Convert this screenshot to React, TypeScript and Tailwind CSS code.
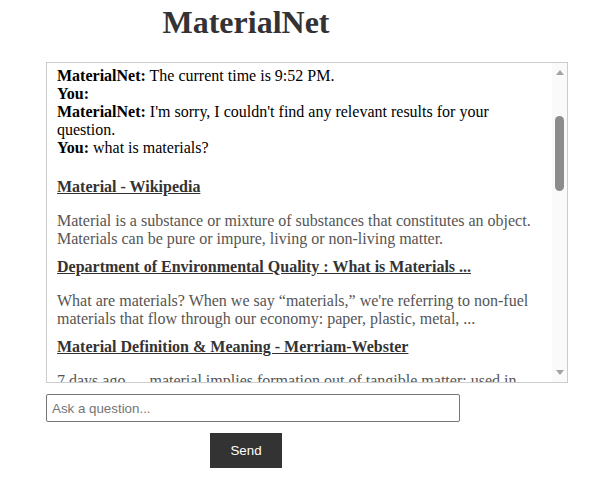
import { useEffect, useRef } from "react";

const history = [
    { who: "MaterialNet", text: "Hello! I'm MaterialNet. How can I help you today?" },
    { who: "You", text: "hello" },
    { who: "MaterialNet", text: "Hi! Ask me anything about materials." },
    { who: "You", text: "what is steel?" },
    { who: "MaterialNet", text: "Steel is an alloy of iron and carbon." },
    { who: "You", text: "thanks" },
    { who: "MaterialNet", text: "You're welcome!" },
    { who: "You", text: "what time is it?" },
    { who: "MaterialNet", text: "The current time is 9:52 PM." },
    { who: "You", text: "" },
    { who: "MaterialNet", text: "I'm sorry, I couldn't find any relevant results for your question." },
    { who: "You", text: "what is materials?" },
];

const results = [
    {
        title: "Material - Wikipedia",
        desc: "Material is a substance or mixture of substances that constitutes an object. Materials can be pure or impure, living or non-living matter.",
    },
    {
        title: "Department of Environmental Quality : What is Materials ...",
        desc: "What are materials? When we say \u201cmaterials,\u201d we're referring to non-fuel materials that flow through our economy: paper, plastic, metal, ...",
    },
    {
        title: "Material Definition & Meaning - Merriam-Webster",
        desc: "7 days ago \u2014 material implies formation out of tangible matter; used in reference to persons, it implies a ...",
    },
    {
        title: "Materials | Definition, Types, & Facts | Britannica",
        desc: "Materials are the substances of which things are made, such as metals, ceramics, polymers and composites.",
    },
    {
        title: "What are materials? - BBC Bitesize",
        desc: "Everything around us is made from materials. Some materials are natural and some are made by people.",
    },
    {
        title: "Materials science - Wikipedia",
        desc: "Materials science is an interdisciplinary field of researching and discovering materials and their properties.",
    },
    {
        title: "Material - Definition, Meaning & Synonyms | Vocabulary.com",
        desc: "Material is the substance that something is made of, such as the wood of a table or the cotton of a shirt.",
    },
    {
        title: "Types of Materials - Science Learning Hub",
        desc: "Materials can be grouped by their properties: strength, hardness, flexibility, conductivity and more.",
    },
    {
        title: "MATERIAL | English meaning - Cambridge Dictionary",
        desc: "a physical substance that things can be made from, or cloth used for making clothes, curtains, etc.",
    },
];

function ScrollBar() {
    return (
        <div className="flex w-[15px] shrink-0 flex-col bg-[#fafafa]">
            <div className="flex h-[15px] items-center justify-center pt-[4px]">
                <svg width="8" height="5" viewBox="0 0 8 5"><path d="M4 0 L8 5 L0 5 Z" fill="#a3a3a3" /></svg>
            </div>
            <div className="flex-1">
                <div className="mx-auto mt-[38px] h-[75px] w-[9px] rounded-full bg-[#8c8c8c]" />
            </div>
            <div className="flex h-[15px] items-center justify-center pb-[5px]">
                <svg width="8" height="5" viewBox="0 0 8 5"><path d="M0 0 L8 0 L4 5 Z" fill="#a3a3a3" /></svg>
            </div>
        </div>
    );
}

function App() {
    const boxRef = useRef<HTMLDivElement>(null);

    useEffect(() => {
        if (boxRef.current) boxRef.current.scrollTop = 150;
    }, []);

    return (
        <div className="min-h-screen bg-white pl-[46px] pt-[4px] font-['Liberation_Serif',serif]">
            <h1 className="w-[400px] text-center text-[32px] leading-[36px] font-bold text-[#333]">MaterialNet</h1>
            <div className="mt-[22px] flex h-[321px] w-[522px] border border-[#ccc]">
                <div
                    ref={boxRef}
                    className="flex-1 overflow-y-scroll p-[10px] text-[16px] leading-[18px] text-black [scrollbar-width:none]"
                >
                    {history.map((m, i) => (
                        <div key={i}>
                            <b>{m.who}:</b> {m.text}
                        </div>
                    ))}
                    <div>
                        {results.map((r, i) => (
                            <div key={i} className={i === 0 ? "mt-[21px]" : "mt-[10.5px]"}>
                                <a href="#" className="font-bold text-[#333] underline">{r.title}</a>
                                <p className="mt-[15.5px] text-[#555]">{r.desc}</p>
                            </div>
                        ))}
                    </div>
                </div>
                <ScrollBar />
            </div>
            <input
                type="text"
                placeholder="Ask a question..."
                className="mt-[11px] block h-[28px] w-[414px] rounded-[2px] border border-[#767676] px-[5px] font-['Liberation_Sans',Arial,sans-serif] text-[13.33px] text-black placeholder:text-[#757575]"
            />
            <div className="flex w-[400px] justify-center pt-[11px]">
                <button className="bg-[#333] px-[20px] py-[10px] font-['Liberation_Sans',Arial,sans-serif] text-[13.33px] leading-[15px] text-white">
                    Send
                </button>
            </div>
        </div>
    );
}
export default App;
